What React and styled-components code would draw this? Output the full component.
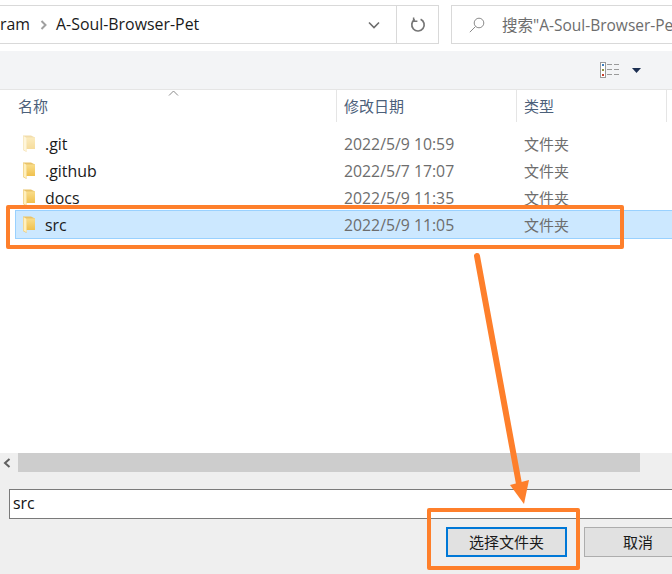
import React from 'react';
import styled, { createGlobalStyle } from 'styled-components';

const GlobalStyle = createGlobalStyle`
  html, body {
    margin: 0;
    padding: 0;
    background: #fff;
  }
  * {
    box-sizing: border-box;
  }
`;

const FONT = `"Open Sans", "Noto Sans CJK SC", sans-serif`;
const ORANGE = '#fe7f2b';

const Dialog = styled.div`
  position: relative;
  width: 672px;
  height: 574px;
  overflow: hidden;
  display: flex;
  flex-direction: column;
  background: #fff;
  font-family: ${FONT};
  font-size: 15px;
`;

const TopBar = styled.div`
  display: flex;
  height: 39px;
  margin-top: 5px;
  flex-shrink: 0;
`;

const AddressBar = styled.div`
  width: 439px;
  flex-shrink: 0;
  display: flex;
  align-items: center;
  border: 1px solid #d9d9d9;
  border-left: none;
  color: #1a1a1a;
  font-size: 15.9px;
`;

const Crumb = styled.span`
  line-height: 1;
  white-space: nowrap;
`;

const CrumbSeparator = styled.svg`
  width: 8px;
  height: 10px;
  margin: 0 8px 0 10px;
`;

const AddressSpacer = styled.div`
  flex: 1;
`;

const Dropdown = styled.div`
  width: 42px;
  height: 100%;
  display: flex;
  align-items: center;
  justify-content: center;
  padding-right: 3px;
`;

const Refresh = styled.div`
  width: 42px;
  height: 100%;
  display: flex;
  align-items: center;
  justify-content: center;
  border-left: 1px solid #d9d9d9;
`;

const SearchBox = styled.div`
  width: 260px;
  margin-left: 12px;
  display: flex;
  align-items: center;
  flex-shrink: 0;
  padding-left: 17px;
  border: 1px solid #d9d9d9;
  color: #6d6d6d;
  white-space: nowrap;
  font-size: 15.5px;
`;

const SearchText = styled.span`
  margin-left: 17px;
`;

const Toolbar = styled.div`
  height: 39px;
  margin-top: 7px;
  flex-shrink: 0;
  display: flex;
  align-items: center;
  justify-content: flex-end;
  padding-right: 31px;
  gap: 13px;
  background: #f3f4f6;
  border-bottom: 1px solid #e5e5e5;
`;

const Header = styled.div`
  position: relative;
  height: 32px;
  flex-shrink: 0;
  display: flex;
  color: #4c607a;
  font-size: 15px;
`;

const HeaderCell = styled.div`
  width: ${(p) => p.$width}px;
  flex-shrink: 0;
  padding-left: ${(p) => (p.$first ? 18 : 7)}px;
  padding-top: 6px;
  line-height: 20px;
  border-left: ${(p) => (p.$first ? 'none' : '1px solid #e5e5e5')};
`;

const SortCaret = styled.svg`
  position: absolute;
  left: 168px;
  top: 0;
  width: 11px;
  height: 6px;
`;

const FileList = styled.div`
  flex: 1;
  padding: 8px 0 0 15px;
`;

const Row = styled.div`
  display: flex;
  align-items: center;
  height: 27px;
  background: ${(p) => (p.$selected ? '#cce8ff' : 'transparent')};
  box-shadow: ${(p) =>
    p.$selected ? '0 -1px 0 #99d1ff, 0 1px 0 #99d1ff, inset 1px 0 0 #99d1ff' : 'none'};
`;

const FolderSlot = styled.div`
  width: 30px;
  padding-left: 8px;
  display: flex;
  flex-shrink: 0;
  opacity: ${(p) => (p.$hidden ? 0.55 : 1)};
`;

const NameCell = styled.div`
  width: 299px;
  color: #1a1a1a;
  flex-shrink: 0;
  font-size: 15.9px;
`;

const DateCell = styled.div`
  width: 180px;
  color: #6d6d6d;
  flex-shrink: 0;
  font-size: 15.8px;
`;

const TypeCell = styled.div`
  color: #6d6d6d;
  font-size: 15px;
`;

const BottomPane = styled.div`
  height: 121px;
  flex-shrink: 0;
  background: #efefef;
`;

const Scrollbar = styled.div`
  height: 19px;
  display: flex;
`;

const ScrollButton = styled.div`
  width: 18px;
  display: flex;
  align-items: center;
  padding-left: 3px;
`;

const ScrollThumb = styled.div`
  width: 622px;
  background: #cdcdcd;
`;

const NameInput = styled.div`
  height: 30px;
  margin: 17px -10px 0 9px;
  padding: 0 0 3px 3px;
  display: flex;
  align-items: center;
  background: #fff;
  border: 1px solid #7a7a7a;
  color: #111;
  font-size: 15.9px;
`;

const ButtonRow = styled.div`
  display: flex;
  margin: 8px 0 0 446px;
  gap: 17px;
`;

const Button = styled.div`
  width: ${(p) => p.$width}px;
  height: 30px;
  flex-shrink: 0;
  display: flex;
  align-items: center;
  justify-content: center;
  padding-bottom: 1px;
  background: #e1e1e1;
  color: #1a1a1a;
  border: ${(p) => (p.$primary ? '2px solid #0078d7' : '1px solid #adadad')};
  font-size: 15px;
`;

const Callout = styled.div`
  position: absolute;
  left: ${(p) => p.$x}px;
  top: ${(p) => p.$y}px;
  width: ${(p) => p.$w}px;
  height: ${(p) => p.$h}px;
  border: 4px solid ${ORANGE};
  border-radius: 2px;
`;

const ArrowOverlay = styled.svg`
  position: absolute;
  left: 0;
  top: 0;
  pointer-events: none;
`;

const Folder = ({ id }) => (
  <svg width="12" height="17" viewBox="0 0 12 17">
    <defs>
      <linearGradient id={id} x1="0" y1="0" x2="0" y2="1">
        <stop offset="0" stopColor="#f9dd8a" />
        <stop offset="1" stopColor="#f0c14e" />
      </linearGradient>
    </defs>
    <path d="M0 0.5H8L12 2.5V14H3.5V17L0 15z" fill="#e9c369" />
    <path d="M3.5 2.5H12V14H3.5z" fill={`url(#${id})`} />
    <path d="M0.5 1L3.5 2.7V16.2L0.5 14.8z" fill="#fff0bd" />
  </svg>
);

const ViewIcon = () => (
  <svg width="19" height="16" viewBox="0 0 19 16">
    <rect x="0.5" y="0.5" width="5" height="15" fill="#fff" stroke="#9a9a9a" />
    <rect x="2" y="2" width="2" height="2" fill="#3f7fbf" />
    <rect x="2" y="7" width="2" height="2" fill="#8f8f3f" />
    <rect x="2" y="12" width="2" height="2" fill="#c8402c" />
    <path d="M7 2.5h5M14 2.5h5M7 7.5h5M14 7.5h5M7 12.5h5M14 12.5h5" stroke="#9a9a9a" />
  </svg>
);

const rows = [
  { name: '.git', date: '2022/5/9 10:59', hidden: true },
  { name: '.github', date: '2022/5/7 17:07' },
  { name: 'docs', date: '2022/5/9 11:35' },
  { name: 'src', date: '2022/5/9 11:05', selected: true },
];

export default function App() {
  return (
    <Dialog>
      <GlobalStyle />
      <TopBar>
        <AddressBar>
          <Crumb>ram</Crumb>
          <CrumbSeparator viewBox="0 0 8 10">
            <path d="M1.5 1l4 4-4 4" fill="none" stroke="#a0a0a0" strokeWidth="2" />
          </CrumbSeparator>
          <Crumb>A-Soul-Browser-Pet</Crumb>
          <AddressSpacer />
          <Dropdown>
            <svg width="12" height="8" viewBox="0 0 12 8">
              <path d="M1 1.5l5 5 5-5" fill="none" stroke="#6d6d6d" strokeWidth="1.6" />
            </svg>
          </Dropdown>
          <Refresh>
            <svg width="16" height="16" viewBox="0 0 16 16">
              <path d="M10.6 2.2a6.2 6.2 0 1 1-5.8.3" fill="none" stroke="#757575" strokeWidth="1.7" />
              <path d="M3.6 0.6v3.6h3.8" fill="none" stroke="#757575" strokeWidth="1.5" />
            </svg>
          </Refresh>
        </AddressBar>
        <SearchBox>
          <svg width="16" height="16" viewBox="0 0 16 16">
            <circle cx="10" cy="6" r="4.8" fill="none" stroke="#8a8a8a" />
            <path d="M6.5 9.5L0.8 15.2" stroke="#8a8a8a" />
          </svg>
          <SearchText>搜索"A-Soul-Browser-Pet"</SearchText>
        </SearchBox>
      </TopBar>
      <Toolbar>
        <ViewIcon />
        <svg width="9" height="5" viewBox="0 0 9 5">
          <path d="M0 0h9L4.5 5z" fill="#1c2f52" />
        </svg>
      </Toolbar>
      <Header>
        <SortCaret viewBox="0 0 11 6">
          <path d="M1 5.5L5.5 1 10 5.5" fill="none" stroke="#8a8a8a" />
        </SortCaret>
        <HeaderCell $first $width={336}>名称</HeaderCell>
        <HeaderCell $width={180}>修改日期</HeaderCell>
        <HeaderCell $width={150}>类型</HeaderCell>
        <HeaderCell $width={6} />
      </Header>
      <FileList>
        {rows.map((row) => (
          <Row key={row.name} $selected={row.selected}>
            <FolderSlot $hidden={row.hidden}>
              <Folder id={`folder-${row.name.replace('.', '')}`} />
            </FolderSlot>
            <NameCell>{row.name}</NameCell>
            <DateCell>{row.date}</DateCell>
            <TypeCell>文件夹</TypeCell>
          </Row>
        ))}
      </FileList>
      <BottomPane>
        <Scrollbar>
          <ScrollButton>
            <svg width="8" height="10" viewBox="0 0 8 10">
              <path d="M6.5 1l-4.5 4 4.5 4" fill="none" stroke="#606060" strokeWidth="2" />
            </svg>
          </ScrollButton>
          <ScrollThumb />
        </Scrollbar>
        <NameInput>src</NameInput>
        <ButtonRow>
          <Button $primary $width={121}>选择文件夹</Button>
          <Button $width={108}>取消</Button>
        </ButtonRow>
      </BottomPane>
      <Callout $x={6} $y={205} $w={618} $h={44} />
      <Callout $x={427} $y={508} $w={153} $h={62} />
      <ArrowOverlay width="672" height="574" viewBox="0 0 672 574">
        <path d="M477 256L519 484" stroke={ORANGE} strokeWidth="6" strokeLinecap="round" fill="none" />
        <path d="M510 485L529 480L524 504z" fill={ORANGE} />
      </ArrowOverlay>
    </Dialog>
  );
}
